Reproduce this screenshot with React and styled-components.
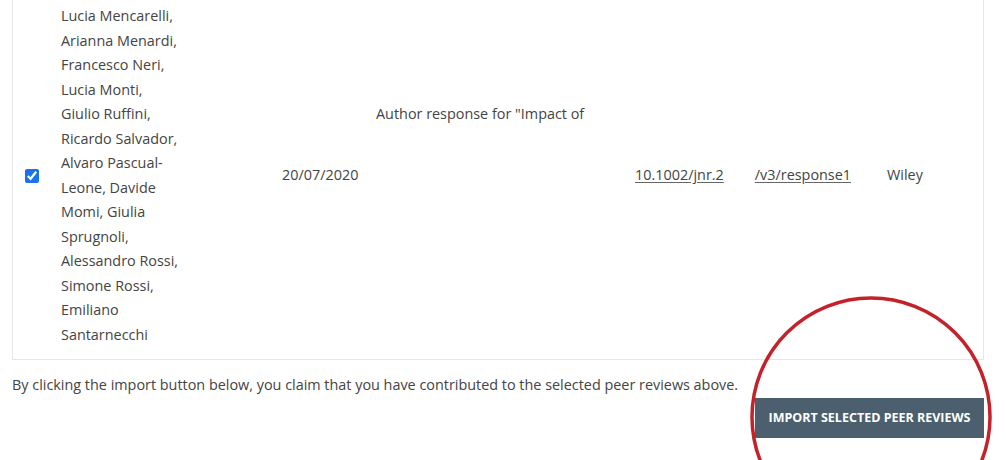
import React from 'react';
import styled, { createGlobalStyle } from 'styled-components';

const GlobalStyle = createGlobalStyle`
  html, body {
    margin: 0;
    padding: 0;
    background: #ffffff;
    overflow: hidden;
  }
  body {
    font-family: 'Open Sans', 'Noto Sans', sans-serif;
    font-size: 14.4px;
    color: #444444;
  }
`;

const Page = styled.div`
  position: relative;
  display: flow-root;
  width: 972px;
  padding: 0 12px;
  height: 460px;
`;

const Card = styled.div`
  margin-top: -9px;
  border: 1px solid #e6e6e6;
  background: #fff;
`;

const Table = styled.table`
  width: 100%;
  border-collapse: collapse;
  table-layout: fixed;
`;

const Cell = styled.td`
  padding: 12px 12px;
  vertical-align: middle;
  line-height: 24.5px;
  text-align: left;
`;

const CheckCell = styled(Cell)`
  padding: 12px 0 12px 12px;
`;

const Check = styled.input`
  margin: 0;
  width: 14px;
  height: 14px;
  accent-color: #1a73e8;
  display: block;
`;

const Authors = styled.div`
  width: 120px;
`;

const Redacted = styled.span`
  display: ${(p) => (p.$block ? 'block' : 'inline-block')};
  width: ${(p) => p.$w || 0}px;
  height: ${(p) => p.$h || 0}px;
`;

const Link = styled.a`
  color: #444444;
  text-decoration: underline;
  text-decoration-color: #666;
  text-underline-offset: 2px;
`;

const Notice = styled.p`
  margin: 13px 0 0;
  line-height: 24.5px;
`;

const Actions = styled.div`
  display: flex;
  justify-content: flex-end;
`;

const ImportButton = styled.button`
  width: 229px;
  height: 40px;
  border: none;
  background: #4b5f6e;
  color: #ffffff;
  font-family: 'Open Sans', 'Noto Sans', sans-serif;
  font-weight: 700;
  font-size: 12.5px;
  text-transform: uppercase;
  padding: 0;
  cursor: pointer;
`;

const Annotation = styled.svg`
  position: absolute;
  left: 748px;
  top: 294px;
  pointer-events: none;
`;

const authors =
  'Lucia Mencarelli, Arianna Menardi, Francesco Neri, Lucia Monti, Giulio Ruffini, Ricardo Salvador, Alvaro Pascual-Leone, Davide Momi, Giulia Sprugnoli, Alessandro Rossi, Simone Rossi, Emiliano Santarnecchi';

export default function App() {
  return (
    <>
      <GlobalStyle />
      <Page>
        <Card>
          <Table>
            <colgroup>
              <col style={{ width: 36 }} />
              <col style={{ width: 221 }} />
              <col style={{ width: 94 }} />
              <col style={{ width: 259 }} />
              <col style={{ width: 252 }} />
              <col style={{ width: 110 }} />
            </colgroup>
            <tbody>
              <tr>
                <CheckCell>
                  <Check type="checkbox" defaultChecked />
                </CheckCell>
                <Cell>
                  <Authors>{authors}</Authors>
                </Cell>
                <Cell>20/07/2020</Cell>
                <Cell>
                  Author response for "Impact of
                  <Redacted $block $h={122} />
                </Cell>
                <Cell>
                  <Link href="#">
                    10.1002/jnr.2<Redacted $w={31} $h={10} />/v3/response1
                  </Link>
                </Cell>
                <Cell>Wiley</Cell>
              </tr>
            </tbody>
          </Table>
        </Card>
        <Notice>
          By clicking the import button below, you claim that you have contributed to the selected peer reviews above.
        </Notice>
        <Actions>
          <ImportButton>Import selected peer reviews</ImportButton>
        </Actions>
        <Annotation width="250" height="250" viewBox="0 0 250 250">
          <circle cx="123" cy="123" r="119" fill="none" stroke="#c4222b" strokeWidth="3.5" />
        </Annotation>
      </Page>
    </>
  );
}
